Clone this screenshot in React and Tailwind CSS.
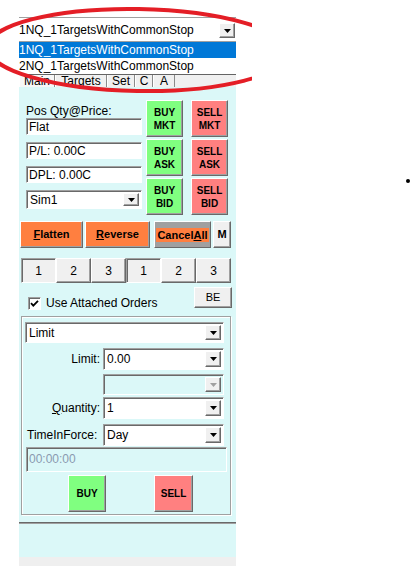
import React from "react";

const raised =
  "border border-t-white border-l-white border-r-[#696969] border-b-[#696969] shadow-[inset_-1px_-1px_0_#a0a0a0]";
const sunken =
  "border border-t-[#a0a0a0] border-l-[#a0a0a0] border-r-white border-b-white shadow-[inset_1px_1px_0_#696969]";

function DropArrow({ disabled = false, className = "" }) {
  return (
    <span className={`flex w-[16px] shrink-0 items-center justify-center bg-[#f0f0f0] ${raised} ${className}`}>
      <svg width="7" height="4" viewBox="0 0 7 4">
        <path d="M0 0h7L3.5 4z" fill={disabled ? "#a0a0a0" : "#000"} />
      </svg>
    </span>
  );
}

function Combo({ value = "", disabled = false, className = "" }) {
  return (
    <div className={`flex p-[2px] ${sunken} ${disabled ? "bg-[#dbf8f8]" : "bg-white"} ${className}`}>
      <span className="flex-1 self-center whitespace-nowrap pl-[1px] pt-[1px] leading-[13px]">{value}</span>
      <DropArrow disabled={disabled} />
    </div>
  );
}

function Field({ children, className = "" }) {
  return (
    <div className={`h-[17px] bg-white pl-[2px] pt-[1px] leading-[14px] ${sunken} ${className}`}>{children}</div>
  );
}

function TradeButton({ lines, color, className = "" }) {
  return (
    <button
      type="button"
      className={`flex flex-col items-center justify-center text-[10px] font-bold leading-[13px] text-black ${raised} ${color} ${className}`}
    >
      {lines.map((l) => (
        <span key={l}>{l}</span>
      ))}
    </button>
  );
}

function Under({ children }) {
  return <span className="underline underline-offset-[1px]">{children}</span>;
}

export default function App() {
  const strategies = ["1NQ_1TargetsWithCommonStop", "2NQ_1TargetsWithCommonStop"];
  const tabs = [
    { label: "Main", w: "w-[36px]", active: true },
    { label: "Targets", w: "w-[52px]" },
    { label: "Set", w: "w-[28px]" },
    { label: "C", w: "w-[18px]" },
    { label: "A", w: "w-[22px]" },
  ];
  const presets = [
    { n: "1", down: true },
    { n: "2" },
    { n: "3" },
    { n: "1", down: true },
    { n: "2" },
    { n: "3" },
  ];

  return (
    <div className="relative h-[581px] w-full overflow-hidden bg-white font-['Liberation_Sans',Arial,sans-serif] text-[12px] text-black">
      <div className="ml-[19px] w-[217px] pt-[17px]">
        {/* strategy selector, opened */}
        <div className="flex h-[24px] items-center border-t border-[#a0a0a0] bg-white">
          <span className="flex-1 whitespace-nowrap pt-[1px] leading-[14px]">{strategies[0]}</span>
          <DropArrow className="mr-[1px] mt-[2px] h-[15px]" />
        </div>
        <div className="border-t border-b border-t-[#a0a0a0] border-b-[#646464] bg-white">
          {strategies.map((s, i) => (
            <div
              key={s}
              className={`h-[16px] whitespace-nowrap leading-[16px] ${i === 0 ? "bg-[#0078d7] text-white" : ""}`}
            >
              {s}
            </div>
          ))}
        </div>

        {/* tab strip just below the list */}
        <div className="flex h-[12px] bg-[#f0f0f0]">
          {tabs.map((t) => (
            <div
              key={t.label}
              className={`${t.w} border-r border-l border-l-white border-r-[#8a8a8a] text-center leading-[12px] ${
                t.active ? "bg-[#f7f7f7]" : ""
              }`}
            >
              {t.label}
            </div>
          ))}
        </div>

        <div className="bg-[#dbf8f8]">
          {/* position + market buttons */}
          <div className="flex pl-[7px] pt-[13px]">
            <div className="flex w-[116px] flex-col">
              <div className="h-[18px] pt-[4px] leading-[14px]">Pos Qty@Price:</div>
              <Field>Flat</Field>
              <Field className="mt-[7px]">P/L: 0.00C</Field>
              <Field className="mt-[7px]">DPL: 0.00C</Field>
              <Combo className="mt-[7px] h-[19px]" value="Sim1" />
            </div>
            <div className="ml-[4px] grid grid-cols-[37px_37px] gap-x-[8px] gap-y-[2px]">
              <TradeButton lines={["BUY", "MKT"]} color="bg-[#80ff80]" className="h-[37px]" />
              <TradeButton lines={["SELL", "MKT"]} color="bg-[#ff8080]" className="h-[37px]" />
              <TradeButton lines={["BUY", "ASK"]} color="bg-[#80ff80]" className="h-[37px]" />
              <TradeButton lines={["SELL", "ASK"]} color="bg-[#ff8080]" className="h-[37px]" />
              <TradeButton lines={["BUY", "BID"]} color="bg-[#80ff80]" className="h-[37px]" />
              <TradeButton lines={["SELL", "BID"]} color="bg-[#ff8080]" className="h-[37px]" />
            </div>
          </div>

          {/* flatten / reverse / cancel */}
          <div className="mt-[6px] flex h-[27px] pl-[1px] text-[11px] font-bold">
            <button type="button" className={`w-[63px] bg-[#ff7f40] ${raised}`}>
              <Under>F</Under>latten
            </button>
            <button type="button" className={`ml-[2px] w-[65px] bg-[#ff7f40] ${raised}`}>
              <Under>R</Under>everse
            </button>
            <button type="button" className={`ml-[4px] flex w-[57px] items-center bg-[#a0a0a0] px-[1px] ${raised}`}>
              <span className="block h-[14px] w-full bg-[#ff7f40] leading-[14px]">
                Cancel<Under>A</Under>ll
              </span>
            </button>
            <button type="button" className={`ml-[2px] w-[18px] bg-[#f0f0f0] ${raised}`}>
              M
            </button>
          </div>

          {/* quantity presets */}
          <div className="mt-[10px] flex pl-[2px]">
            {presets.map((p, i) => (
              <button
                key={i}
                type="button"
                className={`h-[25px] w-[35px] bg-[#f0f0f0] ${p.down ? sunken : raised}`}
              >
                {p.n}
              </button>
            ))}
          </div>

          {/* attached orders */}
          <div className="mt-[4px] flex h-[21px]">
            <div className="ml-[9px] mt-[10px] flex items-start">
              <span className={`flex h-[13px] w-[13px] items-center justify-center bg-white ${sunken}`}>
                <svg width="9" height="9" viewBox="0 0 9 9">
                  <path d="M1 4.2l2.3 2.4L8 1.8" fill="none" stroke="#000" strokeWidth="1.8" />
                </svg>
              </span>
              <span className="ml-[5px] -mt-[1px] leading-[14px]">Use Attached Orders</span>
            </div>
            <button type="button" className={`ml-auto mr-[4px] w-[38px] bg-[#f0f0f0] text-[11px] ${raised}`}>
              BE
            </button>
          </div>

          {/* order entry group */}
          <div className="ml-[2px] mt-[8px] w-[210px] border border-[#a0a0a0] pl-[3px] pr-[6px] pb-[2px] pt-[5px] shadow-[inset_1px_1px_0_#fff,1px_1px_0_#fff]">
            <Combo className="h-[21px]" value="Limit" />
            <div className="mt-[5px] flex h-[22px] items-center">
              <span className="flex-1 pr-[3px] text-right">Limit:</span>
              <Combo className="h-[22px] w-[121px]" value="0.00" />
            </div>
            <div className="mt-[4px] flex h-[21px] justify-end">
              <Combo className="h-[21px] w-[121px]" disabled />
            </div>
            <div className="mt-[2px] flex h-[22px] items-center">
              <span className="flex-1 pr-[3px] text-right">
                <Under>Q</Under>uantity:
              </span>
              <Combo className="h-[22px] w-[121px]" value="1" />
            </div>
            <div className="mt-[5px] flex h-[22px] items-center">
              <span className="flex-1 pl-[2px]">TimeInForce:</span>
              <Combo className="h-[22px] w-[121px]" value="Day" />
            </div>
            <div className={`ml-[1px] mt-[1px] h-[25px] w-[201px] bg-[#dbf8f8] pl-[2px] pt-[4px] leading-[14px] text-[#8a9ab0] ${sunken}`}>
              00:00:00
            </div>
            <div className="mt-[3px] flex">
              <TradeButton lines={["BUY"]} color="bg-[#80ff80]" className="ml-[43px] h-[37px] w-[38px]" />
              <TradeButton lines={["SELL"]} color="bg-[#ff8080]" className="ml-[48px] h-[37px] w-[39px]" />
            </div>
          </div>

          <div className="mt-[7px] h-[1px] bg-[#696969]" />
          <div className="h-[1px] bg-[#a0a0a0]" />
          <div className="h-[33px]" />
        </div>
        <div className="h-[9px] bg-[#efefef]" />
      </div>

      {/* red highlight ring around the strategy list */}
      <svg
        className="pointer-events-none absolute left-0 top-0"
        width="252"
        height="100"
        viewBox="0 0 252 100"
      >
        <ellipse
          cx="138"
          cy="50"
          rx="150"
          ry="41"
          transform="rotate(1 138 50)"
          fill="none"
          stroke="#e41e26"
          strokeWidth="4"
        />
      </svg>

      <div className="absolute left-[406px] top-[179px] h-[4px] w-[4px] rounded-full bg-black" />
    </div>
  );
}
